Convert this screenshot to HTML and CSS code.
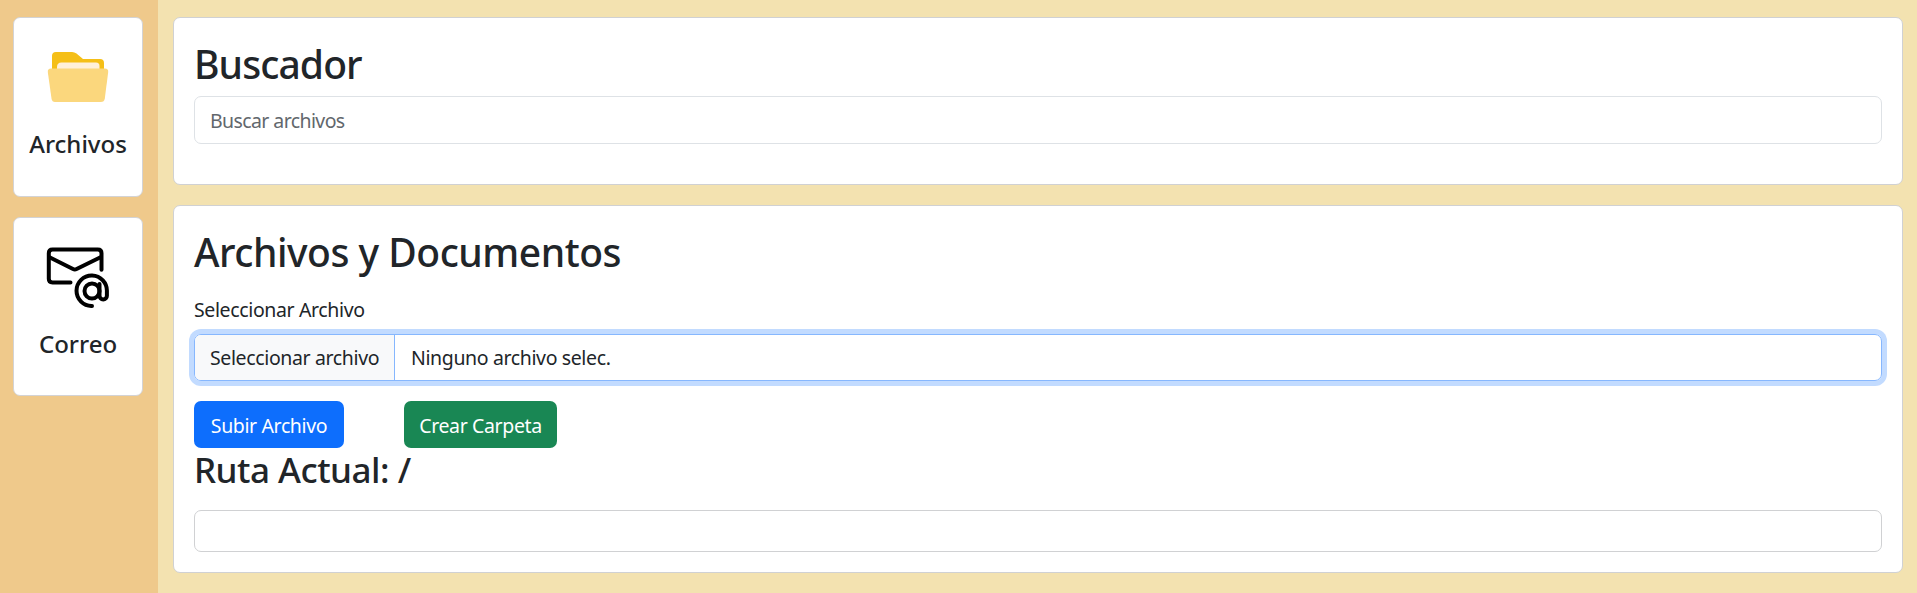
FILE: index.html
```html
<!DOCTYPE html>
<html lang="es">
<head>
<meta charset="utf-8">
<title>Archivos y Documentos</title>
<link rel="stylesheet" href="styles.css">
</head>
<body>
<nav class="sidebar">
  <a class="tile tile-files">
    <svg class="tile-icon" viewBox="0 0 64 64">
      <path fill="#f5bf17" d="M6 51V12q0-4 4-4h16q2.500 0 4.500 1.500L37 15h17q4 0 4 4v32z"/>
      <path fill="#fff0d9" d="M11 51V23q0-4.500 4.500-4.500h34.500q3.500 0 3.500 3.500v29z"/>
      <path fill="#fbd77d" d="M5 24.500h54q3.500 0 3.200 3.500l-3.400 26.500q-.5 3.500-4 3.500H9q-3 0-3.500-3.500L1.800 28q-.3-3.500 3.200-3.500z"/>
    </svg>
    <h5 class="tile-title">Archivos</h5>
  </a>
  <a class="tile tile-mail">
    <svg class="tile-icon" viewBox="0 0 64 64" fill="none" stroke="#000" stroke-width="4" stroke-linecap="round" stroke-linejoin="round">
      <path d="M24.500 38.400H6.500q-3.700 0-3.700-3.700V9.200q0-3.700 3.700-3.700h45.300q3.700 0 3.700 3.700v16.500"/>
      <path d="M3.500 13.300 27 25q1.800.9 3.600 0L54.500 13.300"/>
      <circle cx="46" cy="47" r="7.500"/>
      <path d="M53.500 40v11.800a3.700 3.700 0 0 0 7.400 0V47.500A15.200 15.200 0 1 0 46 62"/>
    </svg>
    <h5 class="tile-title">Correo</h5>
  </a>
</nav>
<main class="main">
  <section class="card search-card">
    <h1 class="heading search-heading">Buscador</h1>
    <input class="search-input" type="text" placeholder="Buscar archivos">
  </section>
  <section class="card files-card">
    <h1 class="heading files-heading">Archivos y Documentos</h1>
    <div class="file-label">Seleccionar Archivo</div>
    <div class="file-input">
      <span class="file-button">Seleccionar archivo</span>
      <span class="file-name">Ninguno archivo selec.</span>
    </div>
    <div class="actions">
      <button class="btn btn-primary">Subir Archivo</button>
      <button class="btn btn-success">Crear Carpeta</button>
    </div>
    <h2 class="route">Ruta Actual: /</h2>
    <div class="listing"></div>
  </section>
</main>
</body>
</html>
```
FILE: styles.css
```css
* { box-sizing: border-box; }

body {
  margin: 0;
  height: 593px;
  display: flex;
  overflow: hidden;
  background: #f3e2b0;
  color: #212529;
  font-family: "Noto Sans", sans-serif;
  font-size: 19.5px;
  line-height: 30px;
  letter-spacing: -0.37px;
}

h1, h2, h5 { margin: 0; font-weight: 500; white-space: nowrap; }

.sidebar {
  width: 158px;
  padding: 17px 15px 0 13px;
  background: #efc98b;
  display: flex;
  flex-direction: column;
  gap: 20px;
}

.tile {
  border: 1px solid #d3d3d5;
  border-radius: 7px;
  background: #fff;
  display: flex;
  flex-direction: column;
  align-items: center;
  padding-top: 26px;
}
.tile-files { height: 180px; }
.tile-mail { height: 179px; }
.tile-icon { width: 64px; height: 64px; display: block; }
.tile-title {
  margin-top: 21px;
  font-size: 24px;
  line-height: 30px;
  letter-spacing: 0;
}

.main {
  flex: 1;
  padding: 17px 14px 0 15px;
  display: flex;
  flex-direction: column;
  gap: 20px;
}

.card {
  border: 1px solid #d0d1d3;
  border-radius: 7px;
  background: #fff;
  padding: 21px 20px 0;
}
.search-card { height: 168px; }
.files-card { height: 368px; }

.heading {
  height: 48px;
  font-size: 39px;
  line-height: 49px;
}
.search-heading { letter-spacing: -0.9px; }
.files-heading { letter-spacing: -0.48px; }

.search-input {
  display: block;
  width: 100%;
  height: 48px;
  margin-top: 9px;
  padding: 0 15px;
  border: 1px solid #dee2e6;
  border-radius: 7px;
  background: #fff;
  font: inherit;
  letter-spacing: -0.6px;
}
.search-input::placeholder { color: #62676c; opacity: 1; }

.file-label { margin-top: 20px; }

.file-input {
  display: flex;
  height: 47px;
  margin-top: 9px;
  border: 1px solid #86b7fe;
  border-radius: 7px;
  box-shadow: 0 0 0 5px #c2dbff;
  overflow: hidden;
  line-height: 46px;
}
.file-button {
  width: 200px;
  padding-left: 15px;
  border-right: 1px solid #86b7fe;
  background: #f8f9fa;
  white-space: nowrap;
}
.file-name { padding-left: 16px; }

.actions {
  display: flex;
  gap: 60px;
  margin-top: 20px;
}
.btn {
  height: 47px;
  padding: 2px 0 0;
  border: 0;
  border-radius: 7px;
  color: #fff;
  font: inherit;
  letter-spacing: -0.37px;
}
.btn-primary { width: 150px; background: #0d6efd; }
.btn-success { width: 153px; background: #198754; }

.route {
  height: 42px;
  margin-top: 1px;
  font-size: 35px;
  line-height: 42px;
  letter-spacing: -0.5px;
}

.listing {
  height: 42px;
  margin-top: 19px;
  border: 1px solid #d0d1d3;
  border-radius: 7px;
}
```
